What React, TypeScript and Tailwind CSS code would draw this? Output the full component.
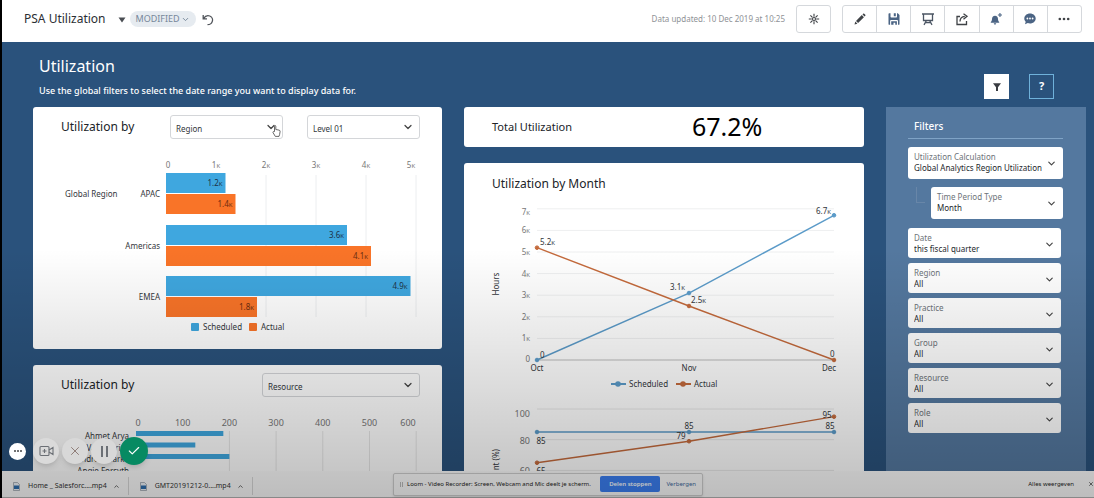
import React from "react";
import { ChevronDown, ChevronUp, Check, X } from "lucide-react";

const BLUE = "#3fa7df";
const ORANGE = "#f97428";

const regionData = [
  { name: "APAC", scheduled: 1.19, actual: 1.39, labels: ["1.2", "1.4"] },
  { name: "Americas", scheduled: 3.62, actual: 4.1, labels: ["3.6", "4.1"] },
  { name: "EMEA", scheduled: 4.89, actual: 1.82, labels: ["4.9", "1.8"] },
];

const resourceData = [
  { name: "Ahmet Arya", hours: 187 },
  { name: "Val Morrice", hours: 127 },
  { name: "Andrea Clarke", hours: 200 },
  { name: "Angie Forsyth", hours: 0 },
];

const filters = ["Region", "Practice", "Group", "Resource", "Role"];

// Number in thousands with the small K suffix
const Kilo = ({ value }: { value: string | number }) => (
  <>
    {value}
    <tspan fontSize="6">K</tspan>
  </>
);

type SelectBoxProps = {
  id: string;
  value: string;
  label?: string;
  children?: React.ReactNode;
};

const SelectBox = ({ id, value, label, children }: SelectBoxProps) => (
  <div className="relative flex-1">
    <select
      id={id}
      aria-label={label}
      className="block h-6 w-full appearance-none rounded-[3px] border border-[#d4d6d9] bg-transparent pl-[5px] pt-1 text-[8px] text-[#33373c]"
    >
      <option>{value}</option>
    </select>
    <ChevronDown size={12} strokeWidth={2.5} className="pointer-events-none absolute right-1.5 top-1.5 text-[#444]" />
    {children}
  </div>
);

type FilterBoxProps = { label: string; value: string; tall?: boolean };

const FilterBox = ({ label, value, tall }: FilterBoxProps) => {
  const id = `filter-${label.toLowerCase().replace(/ /g, "-")}`;
  return (
    <div className={`relative flex flex-1 flex-col rounded-[3px] bg-white pt-1 ${tall ? "h-8" : "h-[30px]"}`}>
      <label htmlFor={id} className="pl-1.5 text-[8px] leading-[11px] text-[#6d7379]">
        {label}
      </label>
      <select id={id} className="h-[11px] w-full appearance-none pl-1.5 text-[8px] leading-[11px] text-[#24282d]">
        <option>{value}</option>
      </select>
      <ChevronDown size={11} strokeWidth={2.5} className="pointer-events-none absolute right-1.5 top-[11px] text-[#444]" />
    </div>
  );
};

const toolbar = [
  {
    name: "Edit",
    icon: (
      <svg width="14" height="14" viewBox="0 0 14 14" fill="#3f4246">
        <path d="M1.500 12.500l.8-2.900 2.100 2.100zM3 8.900l5.800-5.800 2.100 2.100L5.100 11zM9.500 2.400l.7-.7c.3-.3.7-.3 1 0l1.100 1.100c.3.3.3.7 0 1l-.7.7z" />
      </svg>
    ),
  },
  {
    name: "Save",
    icon: (
      <svg width="14" height="14" viewBox="0 0 14 14" fill="#4b6484">
        <path d="M1.500 2c0-.5.3-.8.8-.8H3.500v3.600c0 .4.3.700.700.700h5.100c.4 0 .7-.3.7-.7V1.200h.8l1.700 1.700v9c0 .5-.3.900-.8.900H11V8.900c0-.5-.4-.9-.9-.9H4c-.5 0-.9.4-.9.9v3.900h-.8c-.5 0-.8-.4-.8-.9z" />
        <path d="M6.800 1.200h2v3h-2zM4.200 9.200h5.700v3.600H8.300v-2H6.500v2H4.200z" />
      </svg>
    ),
  },
  {
    name: "Present",
    icon: (
      <svg width="14" height="14" viewBox="0 0 14 14" fill="none" stroke="#4b5563" strokeWidth="1.300">
        <path d="M1 2h12M2.500 2v6.500h9V2M5.500 8.500L3 12.800M8.500 8.500l2.500 4.300M4.500 10.700h5" />
      </svg>
    ),
  },
  {
    name: "Share",
    icon: (
      <svg width="14" height="14" viewBox="0 0 14 14" fill="none" stroke="#3f4246" strokeWidth="1.300">
        <path d="M5 4.500H2v8h9.500V9M5 9.500c0-3 1.500-5 4.800-5.200" />
        <path d="M8.500 1.800L12 4.300 8.500 7.200" />
      </svg>
    ),
  },
  {
    name: "Subscribe",
    icon: (
      <svg width="14" height="14" viewBox="0 0 14 14" fill="#4b6484">
        <path d="M6 3.800c2 0 3 1.500 3 3.200 0 1.500.5 2.200 1.200 3v.7H1.800V10C2.500 9.200 3 8.500 3 7c0-1.700 1-3.200 3-3.200zM4.800 11.300h2.400c0 .8-.5 1.200-1.200 1.200s-1.200-.4-1.200-1.200zM10.400 1h1.100v1.500H13v1.100h-1.500v1.500h-1.100V3.600H8.900V2.500h1.500z" />
      </svg>
    ),
  },
  {
    name: "Comment",
    icon: (
      <svg width="14" height="14" viewBox="0 0 14 14">
        <path d="M7 1.500c3.200 0 5.700 2.200 5.700 5s-2.500 5-5.700 5c-.8 0-1.500-.1-2.200-.4L2 12.300l.7-2.600C1.800 8.900 1.300 7.800 1.300 6.500c0-2.800 2.500-5 5.700-5z" fill="#4b6484" />
        <g fill="#fff">
          <circle cx="4.400" cy="6.500" r=".9" />
          <circle cx="7" cy="6.500" r=".9" />
          <circle cx="9.600" cy="6.500" r=".9" />
        </g>
      </svg>
    ),
  },
  {
    name: "More",
    icon: (
      <svg width="14" height="14" viewBox="0 0 14 14" fill="#3f4246">
        <circle cx="2.800" cy="7" r="1.300" />
        <circle cx="7" cy="7" r="1.300" />
        <circle cx="11.200" cy="7" r="1.300" />
      </svg>
    ),
  },
];

const Header = () => (
  <header className="flex h-[42px] shrink-0 items-center bg-white pl-[22px] pr-3 pb-1">
    <h1 className="text-[12px] text-[#2b2e33]">PSA Utilization</h1>
    <button aria-label="Open dashboard list" className="ml-3 mt-0.5">
      <svg width="8" height="6" viewBox="0 0 8 6">
        <path d="M.5.500h7L4 5.500z" fill="#4a4e53" />
      </svg>
    </button>
    <button className="ml-1 flex h-4 items-center gap-px rounded-full bg-[#e6ebf0] px-1.5 text-[9px] text-[#76879a]">
      MODIFIED
      <ChevronDown size={9} strokeWidth={2.5} />
    </button>
    <button aria-label="Undo" className="ml-1.5 mt-0.5">
      <svg width="12" height="12" viewBox="0 0 12 12" fill="none" stroke="#50545a" strokeWidth="1.300">
        <path d="M1.200 1v3.800h3.800M1.500 4.600C3 2.200 5.500 1.200 7.800 2c2.200.8 3.200 3.200 2.500 5.400-.6 2-2.300 3.300-4.800 3.300" />
      </svg>
    </button>
    <p className="ml-auto text-[8px] text-[#8f9296]">Data updated: 10 Dec 2019 at 10:25</p>
    <button aria-label="Explore" className="ml-[11px] flex h-7 w-[35px] items-center justify-center rounded-[3px] border border-[#d5d8dc]">
      <svg width="12" height="12" viewBox="0 0 12 12" stroke="#3f4246" strokeWidth="1.100">
        <path d="M6 .8v3M6 8.200v3M.8 6h3M8.200 6h3M2.400 2.400l2 2M7.600 7.600l2 2M9.600 2.400l-2 2M4.400 7.600l-2 2" />
        <circle cx="6" cy="6" r="1.500" fill="none" />
      </svg>
    </button>
    <div className="ml-[11px] flex h-7 w-60 divide-x divide-[#d5d8dc] rounded-[3px] border border-[#d5d8dc]">
      {toolbar.map((item) => (
        <button key={item.name} aria-label={item.name} className="flex flex-1 items-center justify-center">
          {item.icon}
        </button>
      ))}
    </div>
  </header>
);

const RegionChart = () => (
  <svg viewBox="0 0 409 194" className="block w-full" fontSize="8" fill="#33373c">
    {[2, 3, 4, 5].map((v) => (
      <path key={v} d={`M${133 + v * 50} 20V162`} stroke="#eceef0" />
    ))}
    <g fill="#777" textAnchor="middle">
      <text x="135" y="13">0</text>
      {[1, 2, 3, 4].map((v) => (
        <text key={v} x={133 + v * 50} y="13"><Kilo value={v} /></text>
      ))}
      <text x="378" y="13"><Kilo value={5} /></text>
    </g>
    <text x="32" y="42">Global Region</text>
    {regionData.map((row, i) => {
      const y = 18 + Math.round(i * 51.5);
      return (
        <g key={row.name} textAnchor="end">
          <text x="127" y={y + 24}>{row.name}</text>
          <rect x="133" y={y} width={row.scheduled * 50} height="20" fill={BLUE} />
          <rect x="133" y={y + 21} width={row.actual * 50} height="20" fill={ORANGE} />
          <text x={130 + row.scheduled * 50} y={y + 13} fill="#1d3348"><Kilo value={row.labels[0]} /></text>
          <text x={130 + row.actual * 50} y={y + 34} fill="#6b2c10"><Kilo value={row.labels[1]} /></text>
        </g>
      );
    })}
    <rect x="158" y="168" width="8" height="8" rx="1" fill={BLUE} />
    <text x="170" y="175">Scheduled</text>
    <rect x="216" y="168" width="8" height="8" rx="1" fill={ORANGE} />
    <text x="228" y="175">Actual</text>
  </svg>
);

const ResourceChart = () => (
  <svg viewBox="0 0 409 100" className="block w-full" fontSize="8" fill="#33373c">
    {[200, 300, 400, 500, 600].map((v) => (
      <path key={v} d={`M${103 + v * 0.467} 18V100`} stroke="#e6e6e6" />
    ))}
    <g fill="#777" textAnchor="middle" fontSize="9">
      <text x="105" y="13">0</text>
      {[100, 200, 300, 400, 500].map((v) => (
        <text key={v} x={103 + v * 0.467} y="13">{v}</text>
      ))}
      <text x="375" y="13">600</text>
    </g>
    {resourceData.map((row, i) => (
      <g key={row.name}>
        <text x="96" y={26 + i * 11.5} textAnchor="end">{row.name}</text>
        <rect x="103" y={18 + i * 11.5} width={row.hours * 0.467} height="5" fill={BLUE} />
      </g>
    ))}
  </svg>
);

const months = [73, 225, 370];
const hourY = (v: number) => 160 - v * 21.6;
const pctY = (v: number) => 209 + (100 - v) * 1.535;

type SeriesProps = { values: number[]; scale: (v: number) => number; color: string };

const Series = ({ values, scale, color }: SeriesProps) => (
  <g fill={color} stroke={color}>
    <polyline points={values.map((v, i) => `${months[i]},${scale(v)}`).join(" ")} fill="none" strokeWidth="1.400" />
    {values.map((v, i) => (
      <circle key={i} cx={months[i]} cy={scale(v)} r="1.800" />
    ))}
  </g>
);

const LINE_BLUE = "#5b9bc9";
const LINE_ORANGE = "#c46a3c";

const MonthCharts = () => (
  <svg viewBox="0 0 400 300" className="block w-full" fontSize="8" fill="#33373c">
    {[1, 2, 3, 4, 5, 6, 7].map((v) => (
      <path key={v} d={`M73 ${hourY(v)}H370`} stroke="#eeeff0" />
    ))}
    <path d="M73 160H370" stroke="#bbb" />
    <g fill="#777" textAnchor="end">
      <text x="66" y="162">0</text>
      {[1, 2, 3, 4, 5, 6].map((v) => (
        <text key={v} x="66" y={hourY(v) + 3}><Kilo value={v} /></text>
      ))}
      <text x="66" y="15"><Kilo value={7} /></text>
    </g>
    <text transform="translate(35 84) rotate(-90)" textAnchor="middle">Hours</text>
    <Series values={[0, 3.1, 6.7]} scale={hourY} color={LINE_BLUE} />
    <Series values={[5.2, 2.5, 0]} scale={hourY} color={LINE_ORANGE} />
    <text x="76" y="45"><Kilo value="5.2" /></text>
    <text x="206" y="90"><Kilo value="3.1" /></text>
    <text x="227" y="103"><Kilo value="2.5" /></text>
    <text x="352" y="14"><Kilo value="6.7" /></text>
    <text x="76" y="158">0</text>
    <text x="366" y="157">0</text>
    <g textAnchor="middle">
      <text x="73" y="171">Oct</text>
      <text x="225" y="171">Nov</text>
      <text x="365" y="171">Dec</text>
    </g>
    <path d="M147 184h15" stroke={LINE_BLUE} strokeWidth="2" />
    <circle cx="154" cy="184" r="2.800" fill={LINE_BLUE} />
    <text x="165" y="187">Scheduled</text>
    <path d="M212 184h15" stroke={LINE_ORANGE} strokeWidth="2" />
    <circle cx="219" cy="184" r="2.800" fill={LINE_ORANGE} />
    <text x="230" y="187">Actual</text>

    {[100, 80, 60].map((v) => (
      <path key={v} d={`M73 ${pctY(v)}H370`} stroke="#e8e8e8" />
    ))}
    <g fill="#777" textAnchor="end" fontSize="9">
      <text x="66" y="217">100</text>
      <text x="66" y="244">80</text>
      <text x="66" y="274">60</text>
    </g>
    <text transform="translate(35 249) rotate(-90)" textAnchor="end">Percent (%)</text>
    <Series values={[85, 85, 85]} scale={pctY} color={LINE_BLUE} />
    <Series values={[65, 79, 95]} scale={pctY} color={LINE_ORANGE} />
    <g textAnchor="middle">
      <text x="77" y="244">85</text>
      <text x="225" y="229">85</text>
      <text x="217" y="239">79</text>
      <text x="363" y="218">95</text>
      <text x="366" y="229">85</text>
      <text x="77" y="274">65</text>
    </g>
  </svg>
);

const FiltersPanel = () => (
  <aside className="bg-[#54789f] pl-[22px] pr-[23px]">
    <h2 className="h-8 border-b border-[#7fa3c6] pl-1.5 pt-3 text-[10px] font-medium leading-[15px] text-white">Filters</h2>
    <div className="mt-2 flex">
      <FilterBox label="Utilization Calculation" value="Global Analytics Region Utilization" tall />
    </div>
    <div className="mt-2 flex">
      <div className="ml-2 mr-1.5 h-4 w-[9px] border-b border-l border-[#6886a8]" />
      <FilterBox label="Time Period Type" value="Month" tall />
    </div>
    <div className="mt-[9px] flex flex-col gap-[5px] pr-0.5">
      <div className="flex">
        <FilterBox label="Date" value="this fiscal quarter" />
      </div>
      {filters.map((name) => (
        <div key={name} className="flex">
          <FilterBox label={name} value="All" />
        </div>
      ))}
    </div>
  </aside>
);

const RecorderControls = () => (
  <div className="absolute bottom-1.5 left-[7px] z-20 flex items-center gap-[3px]">
    <button aria-label="Recorder menu" className="mr-1 flex size-[17px] items-center justify-center gap-px rounded-full bg-white">
      <span className="size-0.5 rounded-full bg-[#444]" />
      <span className="size-0.5 rounded-full bg-[#444]" />
      <span className="size-0.5 rounded-full bg-[#444]" />
    </button>
    <button aria-label="Camera" className="flex size-[26px] items-center justify-center rounded-full bg-[#dadada] shadow-md">
      <svg width="15" height="12" viewBox="0 0 15 12" fill="none" stroke="#6b6f75" strokeWidth="1.100">
        <rect x="1" y="1.500" width="9" height="9" rx="1" />
        <path d="M10 5l4-2.500v7L10 7M5.500 4v4M3.500 6h4" />
      </svg>
    </button>
    <button aria-label="Cancel recording" className="flex size-[26px] items-center justify-center rounded-full bg-[#d8d8d8] shadow-md">
      <X size={14} strokeWidth={1.5} className="text-[#85706a]" />
    </button>
    <button aria-label="Pause recording" className="flex size-[26px] items-center justify-center gap-[3px] rounded-full bg-[#d8d8d8] shadow-md">
      <span className="h-[11px] w-0.5 bg-[#6b6f75]" />
      <span className="h-[11px] w-0.5 bg-[#6b6f75]" />
    </button>
    <button aria-label="Finish recording" className="flex size-7 items-center justify-center rounded-full bg-[#078a62] shadow-md">
      <Check size={14} strokeWidth={2} className="text-white" />
    </button>
  </div>
);

const Download = ({ name }: { name: string }) => (
  <div className="flex h-[18px] items-center border-r border-[#d8d8d8] pl-[11px] pr-2">
    <svg width="7" height="9" viewBox="0 0 7 9">
      <path d="M.5.500h4l2 2v6h-6z" fill="#eef3f8" stroke="#7f8a96" strokeWidth=".6" />
      <rect x="1" y="3.500" width="5" height="3.500" fill="#2f6fae" />
    </svg>
    <span className="ml-2 text-[7px] text-[#333]">{name}</span>
    <button aria-label={`Options for ${name}`} className="ml-1.5">
      <ChevronUp size={7} strokeWidth={3} className="text-[#555]" />
    </button>
  </div>
);

const DownloadBar = () => (
  <footer className="flex h-[27px] shrink-0 items-center border-b border-[#b5b5b5] bg-[#fcfcfc]">
    <div className="flex flex-1 items-center pt-1">
      <Download name="Home _ Salesforc....mp4" />
      <Download name="GMT20191212-0....mp4" />
    </div>
    {/* Screen sharing notice */}
    <div className="flex h-[23px] w-[310px] items-center rounded-xs border border-[#cfcfcf] bg-[#fcfcfc] pl-1.5 shadow">
      <span className="h-[5px] w-[3px] border-x border-[#bbb]" />
      <p className="ml-1 whitespace-nowrap text-[6px] text-[#222]">
        Loom - Video Recorder: Screen, Webcam and Mic deelt je scherm.
      </p>
      <button className="ml-auto h-4 w-[60px] rounded-xs bg-[#3b7ff2] text-[6px] font-semibold text-white">Delen stoppen</button>
      <a href="#" className="mx-1.5 text-[6px] text-[#3c6a9c]">Verbergen</a>
    </div>
    <div className="flex flex-1 items-center justify-end">
      <button className="text-[6px] text-[#222]">Alles weergeven</button>
      <button aria-label="Close downloads" className="ml-3.5">
        <X size={6} strokeWidth={3} className="text-[#444]" />
      </button>
    </div>
  </footer>
);

const App = () => (
  <div
    className="relative flex h-screen flex-col overflow-hidden border-l-2 border-black bg-white"
    style={{ fontFamily: '"Noto Sans", "Open Sans", sans-serif' }}
  >
    <Header />
    <main className="relative min-h-0 flex-1 overflow-hidden bg-[#2a527c] pl-[31px] pr-2">
      <div className="flex h-[65px] items-start">
        <div className="pl-1.5 pt-3 text-white">
          <h2 className="text-[16px] leading-6">Utilization</h2>
          <p className="mt-[7px] text-[9px] font-medium leading-3">
            Use the global filters to select the date range you want to display data for.
          </p>
        </div>
        <div className="ml-auto mr-8 mt-8 flex gap-5">
          <button aria-label="Toggle filters" className="flex size-[25px] items-center justify-center bg-white">
            <svg width="10" height="10" viewBox="0 0 10 10">
              <path d="M1 1.200h8L6 5.200V9H4V5.200z" fill="#3a3d42" />
            </svg>
          </button>
          <button className="size-[25px] border border-[#6fb1da] text-[11px] font-bold text-white">?</button>
        </div>
      </div>

      <div className="grid h-full grid-cols-[409fr_400fr_200px] gap-[22px]">
        <div className="flex flex-col gap-4">
          <section className="rounded-[3px] bg-white">
            <div className="flex items-center pb-4 pl-7 pr-[22px] pt-2">
              <label htmlFor="group-by" className="w-[109px] text-[12px] text-[#202328]">Utilization by</label>
              <div className="flex flex-1 gap-6">
                <SelectBox id="group-by" value="Region">
                  {/* hand pointer */}
                  <svg width="9" height="12" viewBox="0 0 9 12" className="pointer-events-none absolute right-0.5 top-2.5">
                    <path d="M2.500 6.500V1.300c0-1 1.300-1 1.300 0V4.500l3.200.6c.8.2 1.200.6 1.100 1.400L7.600 9.500 7 11.400H3.300L1 7.600c-.4-.8.4-1.300 1-.8z" fill="#fff" stroke="#444" strokeWidth=".8" />
                  </svg>
                </SelectBox>
                <SelectBox id="level" label="Level" value="Level 01" />
              </div>
            </div>
            <RegionChart />
          </section>
          <section className="rounded-t-[3px] bg-white">
            <div className="flex items-center justify-between pb-4 pl-7 pr-[22px] pt-2">
              <label htmlFor="resource-by" className="text-[12px] text-[#202328]">Utilization by</label>
              <div className="flex w-[158px]">
                <SelectBox id="resource-by" value="Resource" />
              </div>
            </div>
            <ResourceChart />
          </section>
        </div>

        <div className="flex flex-col gap-4">
          <section className="flex h-10 items-center rounded-[3px] bg-white pl-7">
            <h3 className="flex-1 text-[11px] text-[#202328]">Total Utilization</h3>
            <p className="w-[172px] text-[25px] text-black">67.2%</p>
          </section>
          <section className="rounded-t-[3px] bg-white">
            <h3 className="h-[37px] pl-7 pt-3 text-[12px] leading-[18px] text-[#202328]">Utilization by Month</h3>
            <MonthCharts />
          </section>
        </div>

        <FiltersPanel />
      </div>
      <RecorderControls />
    </main>
    <DownloadBar />
    <div className="pointer-events-none absolute inset-x-0 bottom-0 h-1/2 bg-linear-to-t from-black/25 to-transparent" />
  </div>
);

export default App;
